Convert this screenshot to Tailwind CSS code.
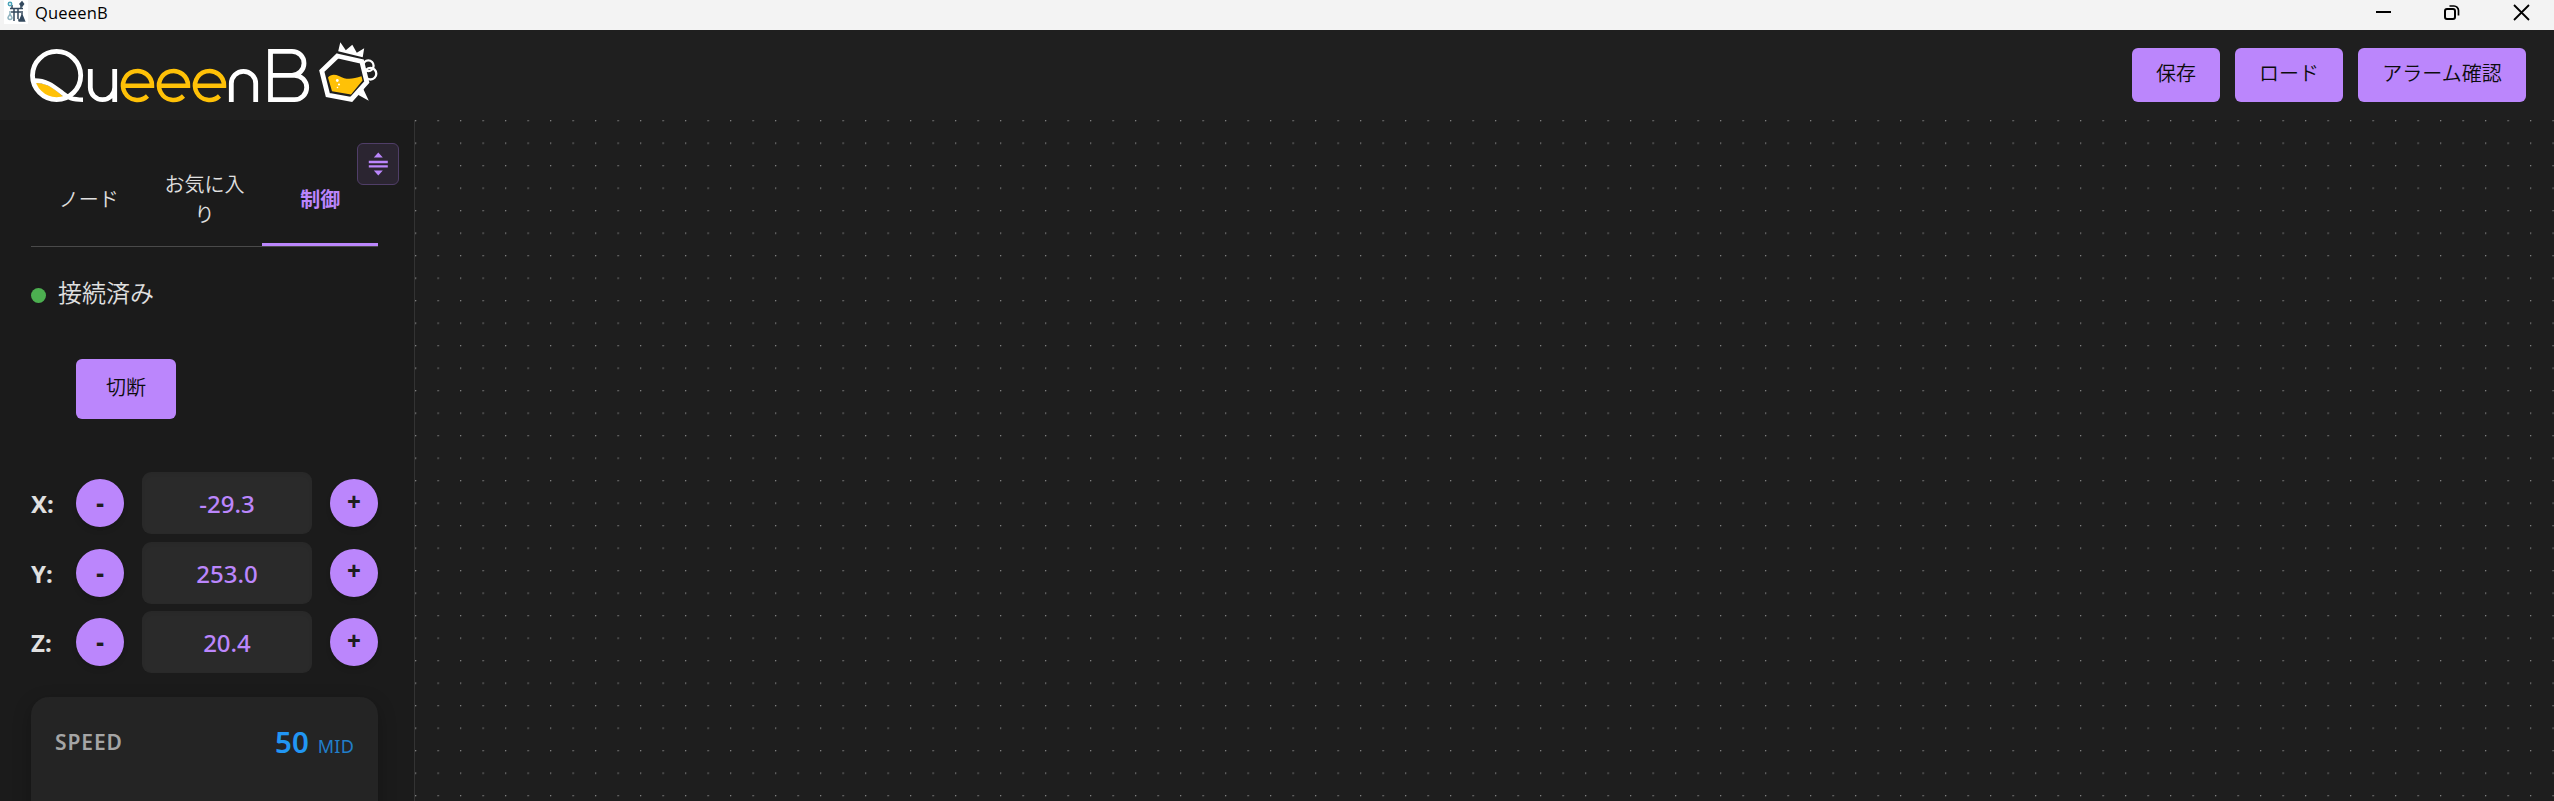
<!DOCTYPE html>
<html lang="ja">
<head>
<meta charset="utf-8">
<title>QueeenB</title>
<script src="https://cdn.jsdelivr.net/npm/@tailwindcss/browser@4"></script>
</head>
<body class="h-[801px] w-[2554px] overflow-hidden bg-[#1e1e1e] font-['Noto_Sans','Noto_Sans_CJK_JP',sans-serif] text-[#e0e0e0]">
<div class="flex h-full flex-col">
  <div class="flex h-[30px] shrink-0 items-center bg-[#f3f3f3] text-black">
    <svg class="mb-[6px] ml-1 h-6 w-6" viewBox="0 0 24 24" fill="none" stroke="#34495e" stroke-width="1.5">
      <rect width="24" height="24" fill="#fff" stroke="none"/>
      <path d="M6 8.500h13M8 8V5M17 8V5M10 9v10M14 9v10M7 12h10M9 20h2M14 20h2"/>
      <circle cx="6" cy="4" r="1.700" stroke="#4aa3b8"/>
      <path d="M6 11v3l-2 3.500a2 2 0 0 0 4 0L6 14" stroke="#8fb3bf"/>
      <path d="M16 4l2-2 1.500 2-1.500 2zM18 11v4l2.500 6h-5l2.500-6" fill="#34495e"/>
    </svg>
    <span class="ml-[7px] mb-1 font-['Open_Sans'] text-[16.5px] leading-6 tracking-[0.2px]">QueeenB</span>
    <svg class="ml-auto h-[30px] w-[180px]" viewBox="2374 0 180 30" fill="none" stroke="#000" stroke-width="2">
      <path d="M2376 12h15"/><rect x="2445" y="9" width="10" height="10" rx="2"/><path d="M2449.500 6h4.500a4.500 4.500 0 0 1 4.500 4.500v5" stroke-width="1.700"/><path d="M2514 5l15 15M2529 5l-15 15" stroke-width="1.800"/>
    </svg>
  </div>
  <header class="flex h-[90px] shrink-0 items-center bg-[#1f1f1f] pl-[30px] pr-[28px]">
    <svg class="h-[62px] w-[350px]" viewBox="30 44 350 62" overflow="visible" fill="none" stroke="#fff" stroke-width="4.800">
      <path d="M35.500 83c12-.5 20 6.500 28 14-10 3.500-24-1-28-14z" fill="#ffc107" stroke="none"/>
      <circle cx="56.600" cy="75.500" r="24.100"/>
      <path d="M33 80.500c14-.5 21 6 30 13 5 4 9 6.200 20 6.200" stroke-width="4.400"/>
      <path d="M90.300 69v18.500a12.200 12.200 0 0 0 24.400 0V69M114.700 86v16"/>
      <g stroke="#ffc107" stroke-width="4.500">
        <path d="M122 85.700h30a14.500 14.500 0 1 0-4.500 10.300"/>
        <path d="M158 85.700h30a14.500 14.500 0 1 0-4.500 10.300"/>
        <path d="M194 85.700h30a14.500 14.500 0 1 0-4.500 10.300"/>
      </g>
      <path d="M231.300 102V83.500a12.200 12.200 0 0 1 24.400 0V102"/>
      <path d="M270.500 51.300h21.500a12 12 0 0 1 0 24h-21.500zM270.500 75.300h24a12.200 12.200 0 0 1 0 24.400h-24z"/>
      <path d="M340.300 42.300l5.500 8 6.500-5.500 4.500 8 7.400-4.600-1.500 9-24.500-6z" fill="#fff" stroke="none"/>
      <path d="M337.500 56l24.300 5.500 5 20.500-15.500 17.300-23.500-4.300-6-24z" stroke-width="4.800"/>
      <path d="M328 77.500c2.500-3.500 7-3.500 11-1.500 8 4.500 14 2.800 22.500.3l1 4.200-11.500 14-19-3.300z" fill="#ffc107" stroke="none"/>
      <circle cx="337.300" cy="80.500" r="1.400" fill="#fff" stroke="none"/><circle cx="339" cy="84.500" r="1.100" fill="#fff" stroke="none"/><circle cx="337.500" cy="87.500" r=".8" fill="#fff" stroke="none"/>
      <circle cx="368.300" cy="65.700" r="5.300" stroke-width="2.300"/><circle cx="370.500" cy="73.700" r="5.800" stroke-width="2.300"/>
      <path d="M366 84l-2.500 5.500 5.300 11.200-10.800-6z" fill="#fff" stroke="none"/>
    </svg>
    <div class="ml-auto flex gap-[15px] text-[20px] leading-[30px] text-[#0c0c0c] font-[350]">
      <button class="h-[54px] w-[88px] rounded-[6px] bg-[#bb86fc] pb-[2px]">保存</button>
      <button class="h-[54px] w-[108px] rounded-[6px] bg-[#bb86fc] pb-[2px]">ロード</button>
      <button class="h-[54px] w-[168px] rounded-[6px] bg-[#bb86fc] pb-[2px]">アラーム確認</button>
    </div>
  </header>
  <main class="flex min-h-0 grow">
    <aside class="relative w-[415px] shrink-0 overflow-hidden border-r border-[#333] bg-[#1b1b1b] pl-[31px] pr-[36px] pt-[38px]">
      <button class="absolute left-[357px] top-[23px] flex h-[42px] w-[42px] items-center justify-center rounded-[6px] border border-[#503e68] bg-[#2b2531]">
        <svg class="h-6 w-6" viewBox="0 0 24 24" fill="#bb86fc"><path d="M12.300 .5l4.500 5h-9zM12.300 23.500l4.500-5h-9zM2.800 8.800h19v2.400h-19zM2.800 13.200h19v2.300h-19z"/></svg>
      </button>
      <nav class="grid h-[89px] grid-cols-3 border-b border-[#4a4a4a] text-center text-[20px] leading-[30px] font-[350]">
        <div class="flex items-center justify-center pb-1">ノード</div>
        <div class="flex items-center justify-center px-[15px] pb-1">お気に入り</div>
        <div class="flex items-center justify-center border-b-[3px] border-[#bb86fc] pb-[2px] font-bold text-[#bb86fc]">制御</div>
      </nav>
      <div class="mt-[28px] flex h-9 items-center gap-3 text-[24px] font-[350]"><span class="mt-[5px] h-[15px] w-[15px] rounded-full bg-[#4caf50]"></span>接続済み</div>
      <button class="ml-[45px] mt-[48px] block h-[60px] w-[100px] rounded-[6px] bg-[#bb86fc] pb-[3px] text-[20px] font-[350] text-[#0c0c0c]">切断</button>
      <div class="mt-[53px] flex flex-col gap-[7.5px] text-[24px]">
        <div class="flex h-[62px] items-center">
          <span class="w-[45px] pt-[2px] font-bold">X:</span>
          <button class="h-12 w-12 rounded-full bg-[#bb86fc] font-extrabold leading-[46px] text-[#1e1e1e] shadow-md">-</button>
          <div class="mx-[18px] flex h-[62px] w-[170px] items-center justify-center rounded-[9px] bg-[#2a2a2a] pt-[2px] font-medium text-[#bb86fc] inset-shadow-sm">-29.3</div>
          <button class="h-12 w-12 rounded-full bg-[#bb86fc] pb-[3px] font-extrabold text-[#1e1e1e] shadow-md">+</button>
        </div>
        <div class="flex h-[62px] items-center">
          <span class="w-[45px] pt-[2px] font-bold">Y:</span>
          <button class="h-12 w-12 rounded-full bg-[#bb86fc] font-extrabold leading-[46px] text-[#1e1e1e] shadow-md">-</button>
          <div class="mx-[18px] flex h-[62px] w-[170px] items-center justify-center rounded-[9px] bg-[#2a2a2a] pt-[2px] font-medium text-[#bb86fc] inset-shadow-sm">253.0</div>
          <button class="h-12 w-12 rounded-full bg-[#bb86fc] pb-[3px] font-extrabold text-[#1e1e1e] shadow-md">+</button>
        </div>
        <div class="flex h-[62px] items-center">
          <span class="w-[45px] pt-[2px] font-bold">Z:</span>
          <button class="h-12 w-12 rounded-full bg-[#bb86fc] font-extrabold leading-[46px] text-[#1e1e1e] shadow-md">-</button>
          <div class="mx-[18px] flex h-[62px] w-[170px] items-center justify-center rounded-[9px] bg-[#2a2a2a] pt-[2px] font-medium text-[#bb86fc] inset-shadow-sm">20.4</div>
          <button class="h-12 w-12 rounded-full bg-[#bb86fc] pb-[3px] font-extrabold text-[#1e1e1e] shadow-md">+</button>
        </div>
      </div>
      <div class="mt-6 flex h-[240px] items-start justify-between rounded-[18px] bg-[#242424] px-6 pt-6 shadow-[0_6px_18px_rgba(0,0,0,0.25)]">
        <span class="pt-[6px] text-[21px] font-semibold leading-[30px] tracking-[0.9px] text-[#a5a5a5]">SPEED</span>
        <div class="flex items-baseline gap-[9px] text-[#2196f3]"><span class="text-[29.5px] font-semibold leading-[42px]">50</span><span class="text-[18px] tracking-[0.2px] opacity-80">MID</span></div>
      </div>
    </aside>
    <section class="grow">
      <svg class="block h-full w-full">
        <defs><pattern id="dots" width="22.5" height="22.5" patternUnits="userSpaceOnUse"><circle cx=".65" cy=".65" r=".7" fill="#858585"/></pattern></defs>
        <rect width="100%" height="100%" fill="url(#dots)"/>
      </svg>
    </section>
  </main>
</div>
</body>
</html>
